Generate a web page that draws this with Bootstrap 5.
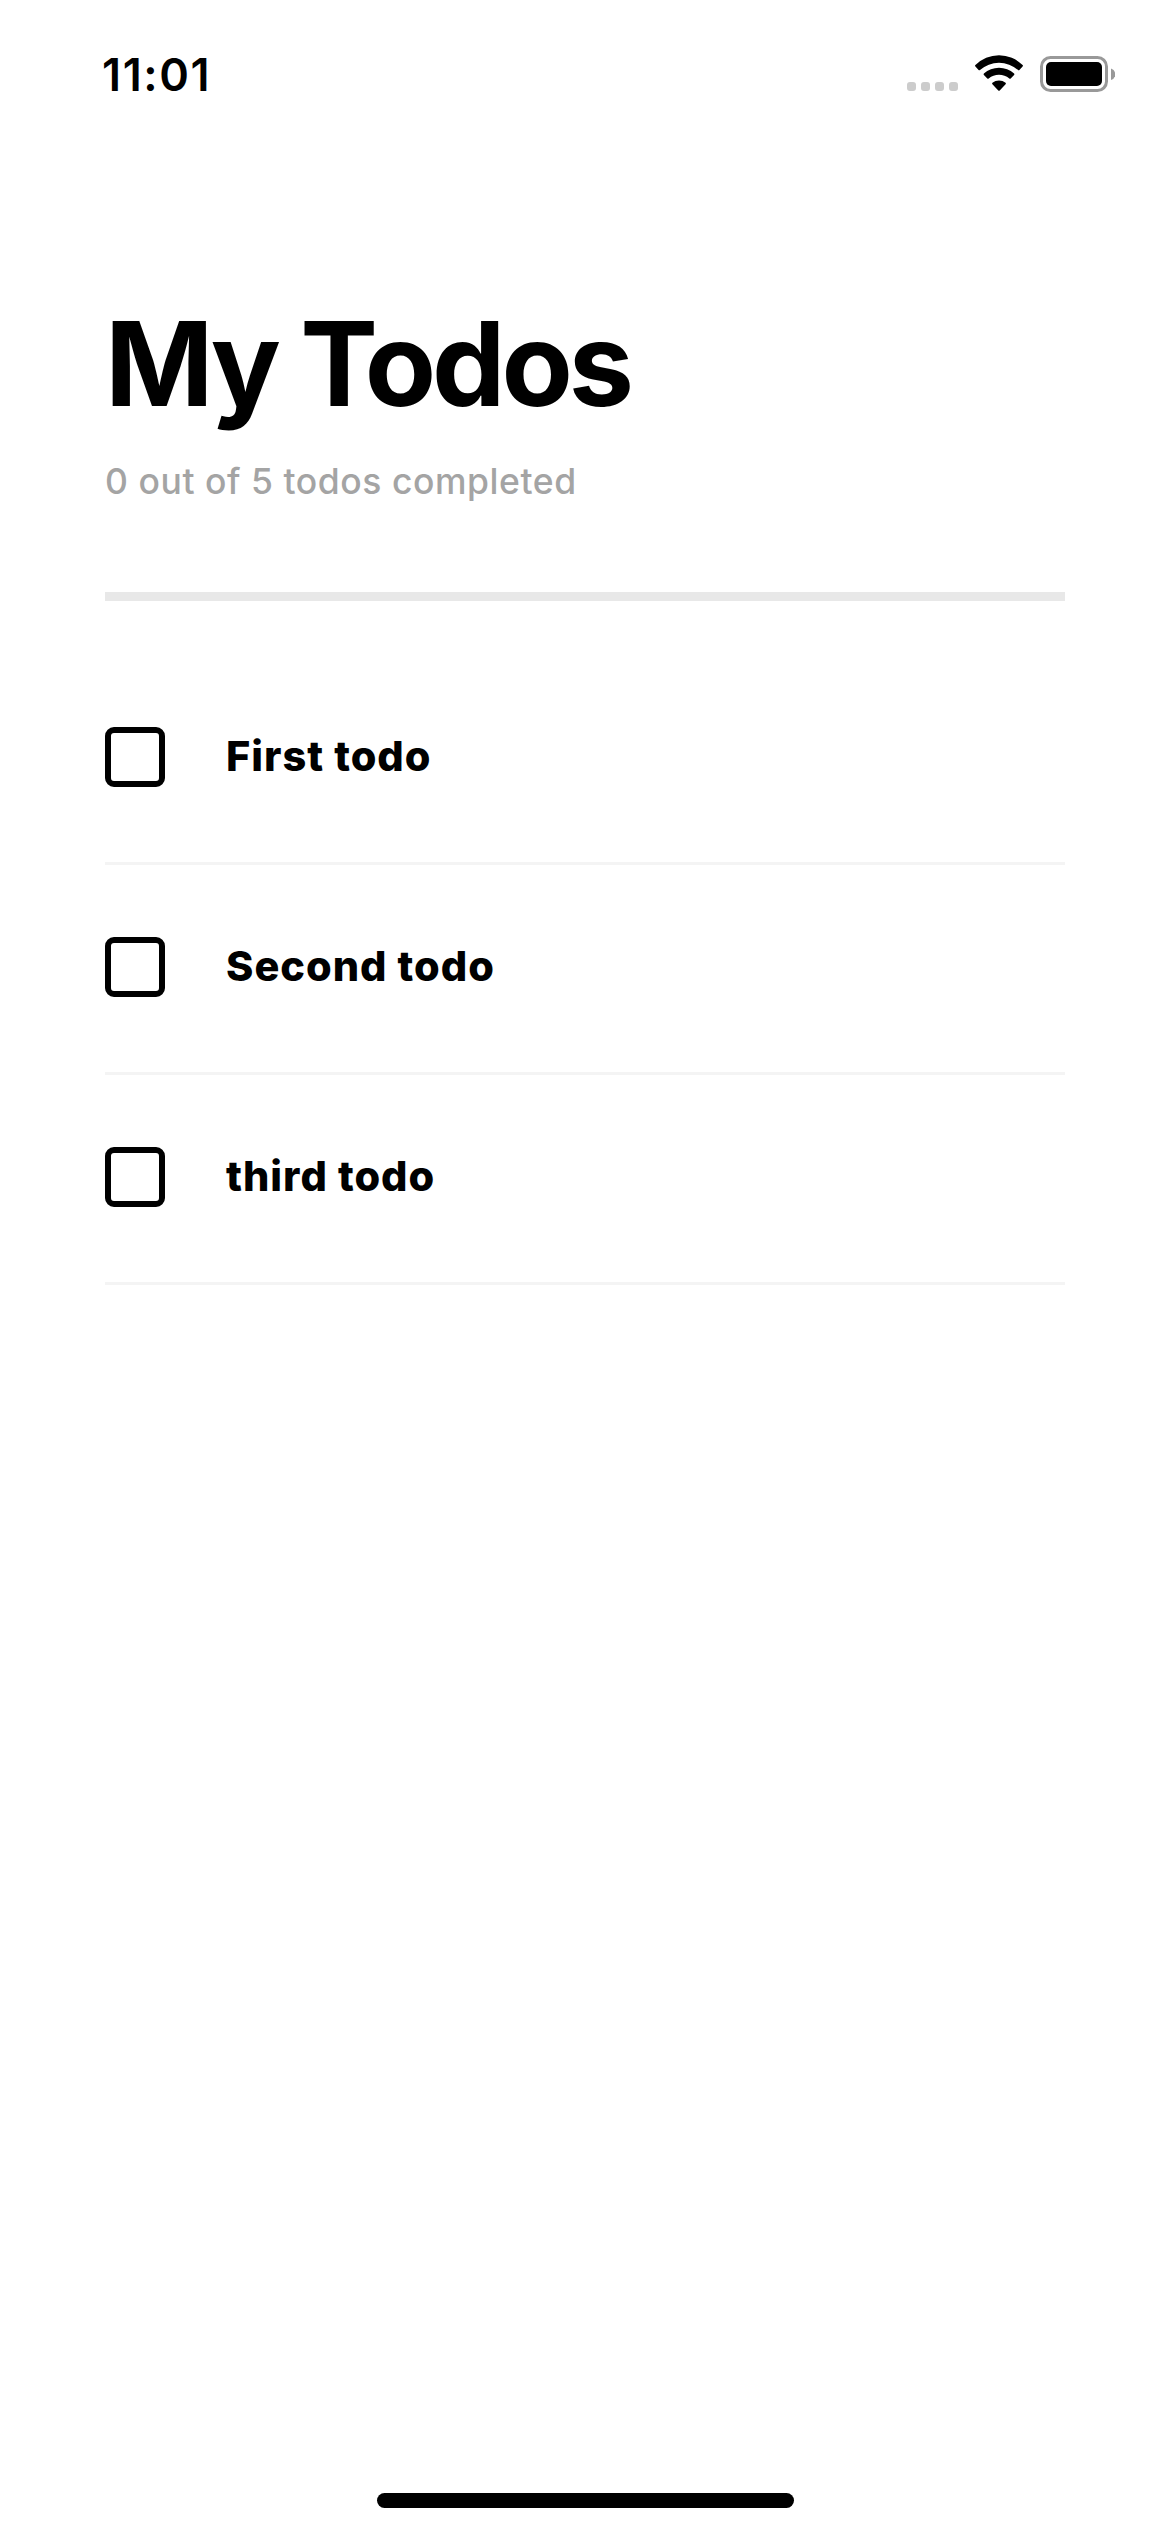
<!DOCTYPE html>
<html lang="en">
<head>
<meta charset="utf-8">
<meta name="viewport" content="width=device-width, initial-scale=1">
<title>My Todos</title>
<link href="https://cdn.jsdelivr.net/npm/bootstrap@5.3.0/dist/css/bootstrap.min.css" rel="stylesheet">
<style>
body { font-family: Inter, "Liberation Sans", sans-serif; background: #fff; color: #000; }
.screen { height: 2532px; }
.status-bar { height: 141px; padding: 48px 55px 0 102px; }
.clock { font-size: 45px; font-weight: 600; line-height: 54px; letter-spacing: 1.6px; }
.status-icons { padding-top: 7px; }
.status-icons svg { display: block; }
.content { padding: 153px 105px 0; }
.page-title { font-size: 116.5px; font-weight: 700; line-height: 140px; letter-spacing: -4.1px; margin: 0 0 26px; }
.summary { font-size: 35.5px; font-weight: 500; line-height: 44px; letter-spacing: .55px; color: #a4a4a4; margin: 0 0 88px; }
.todo-progress { --bs-progress-height: 9px; --bs-progress-bg: #e8e8e8; --bs-progress-border-radius: 0; --bs-progress-bar-bg: #000; margin-bottom: 54px; }
.todo-list { --bs-list-group-bg: transparent; --bs-list-group-border-color: #f4f4f4; --bs-list-group-border-width: 3px; }
.todo-item { height: 210px; padding: 72px 0 0; gap: 61px; }
.todo-list > .todo-item:last-child { border-bottom-width: 3px; }
.todo-check.form-check-input { width: 60px; height: 60px; margin: 0; border: 6px solid #000; border-radius: 9px; flex: none; }
.todo-label { font-size: 41.5px; font-weight: 800; line-height: 58px; letter-spacing: 1px; color: #000; }
.home-bar { width: 417px; height: 15px; margin-bottom: 24px; }
</style>
</head>
<body>
<div class="screen d-flex flex-column">
  <header class="status-bar d-flex justify-content-between align-items-start">
    <span class="clock">11:01</span>
    <div class="status-icons d-flex">
      <svg width="208" height="37" viewBox="0 0 208 37" role="img" aria-label="No signal, Wi-Fi, battery full">
        <g fill="#ccc">
          <rect x="0" y="27" width="9" height="9" rx="3"/>
          <rect x="14" y="27" width="9" height="9" rx="3"/>
          <rect x="28" y="27" width="9" height="9" rx="3"/>
          <rect x="42" y="27" width="9" height="9" rx="3"/>
        </g>
        <g transform="translate(68 0)">
          <path d="M.4 10.1A33 33 0 0 1 47.6 10.1Q48.3 10.8 47.6 11.5L44.4 15Q43.7 15.7 43 15A28.6 28.6 0 0 0 5 15Q4.3 15.7 3.6 15L.4 11.5Q-.3 10.8 .4 10.1Z"/>
          <path d="M8.9 18.5A22.5 22.5 0 0 1 39.1 18.5Q39.8 19.2 39.1 19.9L35.7 23.4Q35 24.1 34.3 23.4A16.5 16.5 0 0 0 13.7 23.4Q13 24.1 12.3 23.4L8.9 19.9Q8.2 19.2 8.9 18.5Z"/>
          <path d="M17.4 27.8A10.5 10.5 0 0 1 30.6 27.8Q31.3 28.5 30.6 29.2L24.7 35.5Q24 36.2 23.3 35.5L17.4 29.2Q16.7 28.5 17.4 27.8Z"/>
        </g>
        <rect x="134.5" y="2.5" width="65" height="33" rx="9" fill="none" stroke="#999" stroke-width="3"/>
        <rect x="139" y="7" width="56" height="24" rx="5"/>
        <path d="M204 13.5a6 6 0 0 1 0 11.5Z" fill="#999"/>
      </svg>
    </div>
  </header>
  <main class="content flex-grow-1">
    <h1 class="page-title">My Todos</h1>
    <p class="summary">0 out of 5 todos completed</p>
    <div class="progress todo-progress" role="progressbar" aria-valuenow="0" aria-valuemin="0" aria-valuemax="5">
      <div class="progress-bar" style="width: 0%"></div>
    </div>
    <ul class="list-group list-group-flush todo-list">
      <li class="list-group-item todo-item d-flex align-items-start">
        <input class="form-check-input todo-check" type="checkbox" id="todo1">
        <label class="todo-label" for="todo1">First todo</label>
      </li>
      <li class="list-group-item todo-item d-flex align-items-start">
        <input class="form-check-input todo-check" type="checkbox" id="todo2">
        <label class="todo-label" for="todo2">Second todo</label>
      </li>
      <li class="list-group-item todo-item d-flex align-items-start">
        <input class="form-check-input todo-check" type="checkbox" id="todo3">
        <label class="todo-label" for="todo3">third todo</label>
      </li>
    </ul>
  </main>
  <footer class="d-flex justify-content-center">
    <div class="home-bar bg-black rounded-pill"></div>
  </footer>
</div>
<script src="https://cdn.jsdelivr.net/npm/bootstrap@5.3.0/dist/js/bootstrap.bundle.min.js"></script>
</body>
</html>
